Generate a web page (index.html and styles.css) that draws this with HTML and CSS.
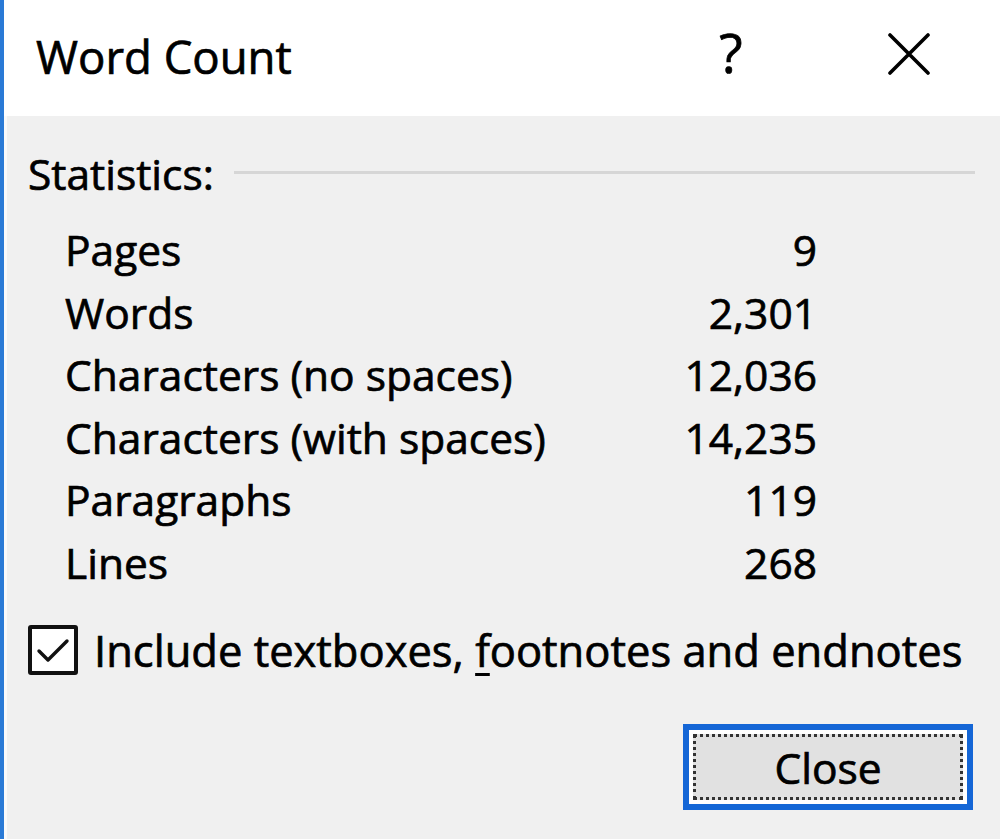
FILE: index.html
```html
<!DOCTYPE html>
<html>
<head>
<meta charset="utf-8">
<link rel="stylesheet" href="styles.css">
</head>
<body>
<div class="dialog">
  <div class="titlebar">
    <div class="title">Word Count</div>
    <div class="help">?</div>
    <div class="close-x">
      <svg viewBox="0 0 42 42" width="42" height="42"><path d="M2 2 L40 40 M40 2 L2 40" stroke="#000" stroke-width="3.6" stroke-linecap="round" fill="none"/></svg>
    </div>
  </div>
  <div class="content">
    <div class="group-head">
      <span class="group-label">Statistics:</span>
      <span class="group-line"></span>
    </div>
    <div class="stats">
      <div class="label">Pages</div><div class="value">9</div>
      <div class="label">Words</div><div class="value">2,301</div>
      <div class="label">Characters (no spaces)</div><div class="value">12,036</div>
      <div class="label">Characters (with spaces)</div><div class="value">14,235</div>
      <div class="label">Paragraphs</div><div class="value">119</div>
      <div class="label">Lines</div><div class="value">268</div>
    </div>
    <div class="check-row">
      <span class="checkbox">
        <svg viewBox="0 0 50 50" width="50" height="50"><path d="M11 26 L20 35 L39 16" stroke="#111" stroke-width="3.4" fill="none" stroke-linecap="round" stroke-linejoin="round"/></svg>
      </span>
      <span class="check-label">Include textboxes, <u>f</u>ootnotes and endnotes</span>
    </div>
    <div class="buttons">
      <div class="btn"><div class="btn-inner">Close</div></div>
    </div>
  </div>
</div>
</body>
</html>
```

FILE: styles.css
```css
html, body {
  margin: 0;
  padding: 0;
}
body {
  width: 1000px;
  height: 839px;
  overflow: hidden;
  background: #f0f0f0;
  font-family: "Open Sans", "Noto Sans", sans-serif;
  color: #000;
  -webkit-text-stroke: 0.7px #000;
}
.dialog {
  height: 839px;
  border-left: 4px solid #2a7ad6;
  box-sizing: border-box;
}
.titlebar {
  height: 116px;
  background: #fff;
  display: flex;
  align-items: flex-start;
}
.title {
  font-size: 45.5px;
  line-height: 60px;
  margin-top: 26px;
  margin-left: 32px;
  flex: 1;
}
.help {
  font-size: 54px;
  line-height: 60px;
  margin-top: 22px;
  width: 40px;
  text-align: center;
  margin-right: 137px;
}
.close-x {
  margin-top: 33px;
  margin-right: 70px;
  width: 42px;
  height: 42px;
}
.close-x svg {
  display: block;
}
.content {
  border-left: 3px solid #fafafa;
  padding: 33px 0 0 21px;
  height: 723px;
  box-sizing: border-box;
}
.group-head {
  display: flex;
  align-items: center;
  height: 50px;
}
.group-label {
  font-size: 42.5px;
  line-height: 50px;
}
.group-line {
  flex: 1;
  margin-left: 20px;
  margin-right: 25px;
  height: 3px;
  background: #d6d6d6;
  margin-top: -4px;
}
.stats {
  display: grid;
  grid-template-columns: 1fr auto;
  width: 752px;
  margin-left: 37px;
  margin-top: 20px;
  font-size: 42.5px;
  line-height: 62.5px;
}
.value {
  text-align: right;
}
.check-row {
  display: flex;
  align-items: center;
  margin-top: 31px;
  height: 50px;
}
.checkbox {
  width: 50px;
  height: 50px;
  box-sizing: border-box;
  border: 4px solid #111;
  border-radius: 3px;
  background: #fff;
  position: relative;
  flex: 0 0 auto;
}
.checkbox svg {
  position: absolute;
  left: -4px;
  top: -4px;
}
.check-label {
  font-size: 43.5px;
  line-height: 50px;
  margin-left: 16px;
  padding-top: 2px;
}
.check-label u {
  text-decoration-thickness: 3px;
  text-underline-offset: 6px;
}
.buttons {
  display: flex;
  justify-content: flex-end;
  margin-top: 49px;
  padding-right: 27px;
}
.btn {
  width: 290px;
  height: 86px;
  box-sizing: border-box;
  border: 6px solid #1466d6;
  background: #fff;
  padding: 4px;
}
.btn-inner {
  height: 100%;
  box-sizing: border-box;
  border: 3px dotted #333;
  background: #e1e1e1;
  text-align: center;
  font-size: 42.5px;
  line-height: 62px;
}
```
